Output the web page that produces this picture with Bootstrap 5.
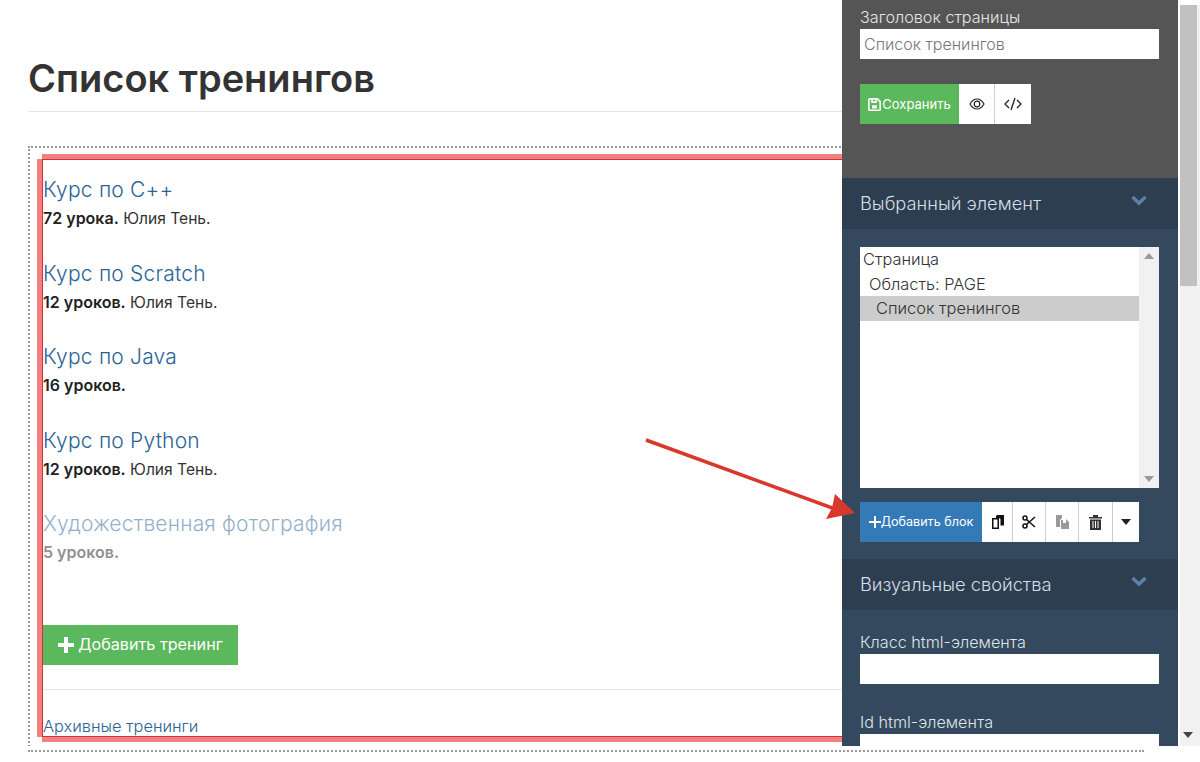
<!DOCTYPE html>
<html lang="ru"><head><meta charset="utf-8"><title>Список тренингов</title>
<link href="https://cdn.jsdelivr.net/npm/bootstrap@5.3.0/dist/css/bootstrap.min.css" rel="stylesheet">
<style>
html,body{height:762px;overflow:hidden;background:#fff}
body{font-family:Inter,"Noto Sans",sans-serif;color:#333;position:relative}
.pg-main{padding:0 0 0 28px;width:1180px}
.pg-title{font-size:38px;font-weight:600;line-height:46px;margin:0;padding-top:55px;height:111px;color:#333}
.pg-rule{border-top:1px solid #e6e6e6;width:820px;height:35px}
.pg-dash{width:1116px;height:604px;border:2px dotted #999;padding:11px 0 0 12px;margin-top:0}
.pg-red{width:1100px;height:578px;border:1px solid #d3323c;box-shadow:0 -5px 0 0 #f47f7f,-5px 0 0 0 #f47f7f,0 5px 0 0 #f47f7f;padding-top:18px}
.course{height:83.5px}
.course a{display:block;font-size:21px;letter-spacing:.2px;line-height:24px;color:#2a6496;text-decoration:none;font-weight:300}
.course p{font-size:15.6px;line-height:20px;margin:6px 0 0;color:#333;font-weight:400}
.course b{font-size:16px;font-weight:600;color:#222}
.course.dim{opacity:.5}
.add-train{background:#5cb85c;color:#fff;border:0;border-radius:0;height:40px;width:195px;font-size:16.2px;margin-top:29px;padding:0 0 0 0;display:flex;align-items:center;justify-content:center;gap:4px}
.arch-rule{border-top:1px solid #e6e6e6;margin-top:24px;width:800px;height:27px}
.arch{font-size:16.4px;color:#2a6496;text-decoration:none;line-height:20px;display:block;font-weight:300}
.side{position:absolute;left:842px;top:0;width:336px;height:746px;background:#34495e;color:#dfe4e9;overflow:hidden}
.s-top{background:#555;height:178px;padding:8px 18px 0;color:#e6e6e6}
.s-lab{font-size:16.2px;line-height:18px;margin:0 0 3px;display:block;font-weight:300}
.s-inp{display:block;width:299px;height:30px;border:0;border-radius:0;background:#fff;color:#777;font-size:16px;line-height:30px;padding:0 4px;font-weight:300}
.s-head{background:#2c3e50;height:51px;padding:0 31px 0 18px;display:flex;align-items:center;justify-content:space-between;font-size:18.3px;color:#d6dde4;font-weight:300}
.s-head svg{margin:-6px 0 0}
.s-head span{line-height:48px;height:50px}
.btns{display:flex;height:40px}
.btns .btn{border:0;border-radius:0;padding:0;display:flex;align-items:center;justify-content:center;font-size:13px;color:#fff;line-height:1;box-shadow:none}
.btns .wb{background:#fff;color:#111;border-left:1px solid #ccc}
.listbox{display:flex;width:299px;height:241px;background:#fff;color:#333;font-size:16.4px;margin:18px 18px 14px;font-weight:300}
.lb-items{flex:1;line-height:24.5px}
.lb-items div{height:24.5px;padding-left:3px}
.lb-items .i1{padding-left:9px}.lb-items .i2{padding-left:16px;background:#ccc}
.lb-bar{width:20px;background:#f1f1f1;display:flex;flex-direction:column;justify-content:space-between;align-items:center;padding:6px 0}
.vis{padding:23px 18px 0}
.vis .s-lab{margin:0 0 3px}
.vis .s-inp{margin-bottom:29px}
.sb-track{position:absolute;left:1180px;top:5px;width:20px;height:741px;background:#f1f1f1}
.sb-thumb{width:17px;height:281px;background:#c1c1c1}
.sb-arrow{position:absolute;left:3px;bottom:8px}
.bot-dash{position:absolute;left:28px;top:746px;width:1116px;height:6px;border-bottom:2px dotted #999;background:#fff}
.bot-white{position:absolute;left:0;top:746px;width:1200px;height:16px;background:#fff}
.arrow{position:absolute;left:640px;top:430px;overflow:visible}
</style></head><body>
<div class="pg-main">
<h1 class="pg-title">Список тренингов</h1>
<div class="pg-rule"></div>
<div class="pg-dash"><div class="pg-red">
<div class="course"><a href="#">Курс по С++</a><p><b>72 урока.</b> Юлия Тень.</p></div>
<div class="course"><a href="#">Курс по Scratch</a><p><b>12 уроков.</b> Юлия Тень.</p></div>
<div class="course"><a href="#">Курс по Java</a><p><b>16 уроков.</b></p></div>
<div class="course"><a href="#">Курс по Python</a><p><b>12 уроков.</b> Юлия Тень.</p></div>
<div class="course dim"><a href="#">Художественная фотография</a><p><b>5 уроков.</b></p></div>
<button class="add-train"><svg width="16" height="16" viewBox="0 0 16 16"><path fill="#fff" d="M6 0h4v6h6v4h-6v6H6v-6H0V6h6z"/></svg>Добавить тренинг</button>
<div class="arch-rule"></div>
<a class="arch" href="#">Архивные тренинги</a>
</div></div>
</div>
<div class="bot-white"></div><div class="bot-dash"></div>
<div class="sb-track"><div class="sb-thumb"></div><svg class="sb-arrow" width="10" height="6"><path fill="#444" d="M0 0h10L5 6z"/></svg></div>
<aside class="side">
<div class="s-top">
<label class="s-lab">Заголовок страницы</label>
<div class="s-inp">Список тренингов</div>
<div class="btns" style="margin-top:25px">
<button class="btn" style="width:99px;background:#5cb85c;gap:1px"><svg width="13" height="13" viewBox="0 0 16 16"><path fill="#fff" fill-rule="evenodd" d="M2 0h10l4 4v10a2 2 0 0 1-2 2H2a2 2 0 0 1-2-2V2a2 2 0 0 1 2-2zM2 2v12h12V5l-3-3v4H4V2zM6 2v2h3V2zM5 9h6v4H5z"/></svg>Сохранить</button>
<button class="btn wb" style="width:35px;border:0"><svg width="16" height="14" viewBox="0 0 16 14" fill="none" stroke="#222" stroke-width="1.200"><path d="M1 7c2-3.500 4.500-5 7-5s5 1.500 7 5c-2 3.500-4.500 5-7 5S3 10.500 1 7z"/><circle cx="8" cy="7" r="2.800"/></svg></button>
<button class="btn wb" style="width:37px"><svg width="18" height="14" viewBox="0 0 18 14" fill="none" stroke="#222" stroke-width="1.300"><path d="M5 3 1 7l4 4M13 3l4 4-4 4M11 1 7 13"/></svg></button>
</div>
</div>
<div class="s-head"><span>Выбранный элемент</span><svg width="16" height="11" viewBox="0 0 16 11" fill="none" stroke="#5d7fa8" stroke-width="3.500"><path d="M1.500 2 8 8l6.500-6"/></svg></div>
<div class="listbox"><div class="lb-items"><div>Страница</div><div class="i1">Область: PAGE</div><div class="i2">Список тренингов</div></div>
<div class="lb-bar"><svg width="10" height="6"><path fill="#999" d="M0 6h10L5 0z"/></svg><svg width="10" height="6"><path fill="#999" d="M0 0h10L5 6z"/></svg></div></div>
<div class="btns" style="margin:0 18px 17px">
<button class="btn" style="width:122px;background:#337ab7;gap:0;font-size:12.6px"><svg width="12" height="12" viewBox="0 0 12 12"><path fill="#fff" d="M5 0h2v5h5v2H7v5H5V7H0V5h5z"/></svg>Добавить блок</button>
<button class="btn wb" style="width:30px;border:0"><svg width="13" height="14" viewBox="0 0 13 14"><path fill="#111" d="M6 0h7v10.500H9.500V4L8 3H5V1z"/><path fill="#111" fill-rule="evenodd" d="M1 3h7v11H1zM2.500 4.500v8h4v-8z"/></svg></button>
<button class="btn wb" style="width:33px"><svg width="14" height="14" viewBox="0 0 14 14" fill="none" stroke="#111" stroke-width="1.500"><circle cx="3" cy="3" r="2"/><circle cx="3" cy="11" r="2"/><path d="M4.500 4.500 13 12M4.500 9.500 13 2"/></svg></button>
<button class="btn wb" style="width:33px"><svg width="15" height="14" viewBox="0 0 15 14"><path fill="#999" d="M1 0h6v3L5 5v7H1zM6 5h2v3h3V4l3 3v7H6z"/></svg></button>
<button class="btn wb" style="width:34px"><svg width="13" height="15" viewBox="0 0 13 15" fill="#333"><path d="M4 0h5v2h4v1.500H0V2h4zM1 4.500h11V15H1z"/><path stroke="#fff" d="M4 6v7M6.500 6v7M9 6v7"/></svg></button>
<button class="btn wb" style="width:27px"><svg width="10" height="6"><path fill="#222" d="M0 0h10L5 6z"/></svg></button>
</div>
<div class="s-head"><span>Визуальные свойства</span><svg width="16" height="11" viewBox="0 0 16 11" fill="none" stroke="#5d7fa8" stroke-width="3.500"><path d="M1.500 2 8 8l6.500-6"/></svg></div>
<div class="vis">
<label class="s-lab">Класс html-элемента</label><div class="s-inp"></div>
<label class="s-lab">Id html-элемента</label><div class="s-inp"></div>
</div>
</aside>
<svg class="arrow" width="215" height="95" viewBox="0 0 215 95"><path stroke="#d9382c" stroke-width="3.500" d="M6 10 195 79"/><path fill="#d9382c" d="M195 64 215 83 186 89 192 78z"/></svg>
</body></html>
